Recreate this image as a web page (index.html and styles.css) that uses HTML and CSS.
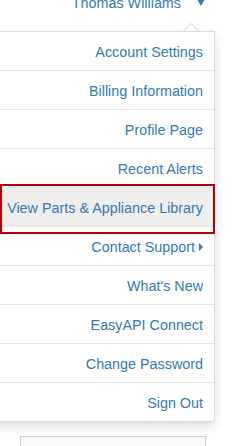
FILE: index.html
```html
<!DOCTYPE html>
<html lang="en">
<head>
<meta charset="utf-8">
<title>User menu</title>
<link rel="stylesheet" href="styles.css">
</head>
<body>
<div class="topbar">
  <span class="user-name">Thomas Williams</span>
  <span class="caret-down"></span>
</div>
<ul class="menu">
  <li class="menu-item"><a href="#">Account Settings</a></li>
  <li class="menu-item"><a href="#">Billing Information</a></li>
  <li class="menu-item"><a href="#">Profile Page</a></li>
  <li class="menu-item"><a href="#">Recent Alerts</a></li>
  <li class="menu-item is-active"><a href="#">View Parts &amp; Appliance Library</a><span class="focus-ring"></span></li>
  <li class="menu-item"><a href="#">Contact Support<span class="caret-right"></span></a></li>
  <li class="menu-item"><a href="#">What's New</a></li>
  <li class="menu-item"><a href="#">EasyAPI Connect</a></li>
  <li class="menu-item"><a href="#">Change Password</a></li>
  <li class="menu-item"><a href="#">Sign Out</a></li>
</ul>
<div class="below-box"></div>
</body>
</html>
```
FILE: styles.css
```css
html, body {
  margin: 0;
  padding: 0;
  background: #ffffff;
}
body {
  width: 240px;
  height: 446px;
  overflow: hidden;
  font-family: "Liberation Sans", Arial, Helvetica, sans-serif;
  font-size: 14.35px;
  color: #337ab7;
}
.topbar {
  height: 31px;
  overflow: hidden;
  display: flex;
  justify-content: flex-end;
  align-items: flex-start;
  gap: 16px;
  padding-right: 35px;
}
.user-name {
  margin-top: -4px;
  line-height: 14px;
  white-space: nowrap;
}
.caret-down {
  margin-top: -1px;
  width: 0;
  height: 0;
  border-left: 4px solid transparent;
  border-right: 4px solid transparent;
  border-top: 7px solid #337ab7;
}
.menu {
  position: relative;
  list-style: none;
  margin: 0 0 0 -10px;
  padding: 0;
  width: 223px;
  background: #ffffff;
  border: 1px solid rgba(0, 0, 0, 0.15);
  border-radius: 0 0 3px 3px;
  box-shadow: 0 4px 10px rgba(0, 0, 0, 0.14);
}
.menu::before {
  content: "";
  position: absolute;
  top: -9px;
  left: 192px;
  border-left: 8px solid transparent;
  border-right: 8px solid transparent;
  border-bottom: 8px solid rgba(0, 0, 0, 0.18);
}
.menu::after {
  content: "";
  position: absolute;
  top: -8px;
  left: 193px;
  border-left: 7px solid transparent;
  border-right: 7px solid transparent;
  border-bottom: 7px solid #ffffff;
}
.menu-item {
  position: relative;
  border-bottom: 1px solid #e5e5e5;
}
.menu-item:last-child {
  border-bottom: none;
}
.menu-item a {
  display: flex;
  justify-content: flex-end;
  align-items: center;
  gap: 4px;
  height: 36px;
  padding: 2px 11px 0 0;
  color: #337ab7;
  text-decoration: none;
  white-space: nowrap;
}
.menu-item.is-active a {
  background: #eeeeee;
}
.focus-ring {
  position: absolute;
  top: -4px;
  left: 9px;
  width: 211px;
  height: 46px;
  border: 2px solid #b40000;
  pointer-events: none;
}
.caret-right {
  width: 0;
  height: 0;
  border-top: 4px solid transparent;
  border-bottom: 4px solid transparent;
  border-left: 4px solid #337ab7;
}
.below-box {
  margin: 14px 0 0 20px;
  width: 184px;
  height: 30px;
  border: 1px solid #cccccc;
  background: #f8f8f8;
}
```
